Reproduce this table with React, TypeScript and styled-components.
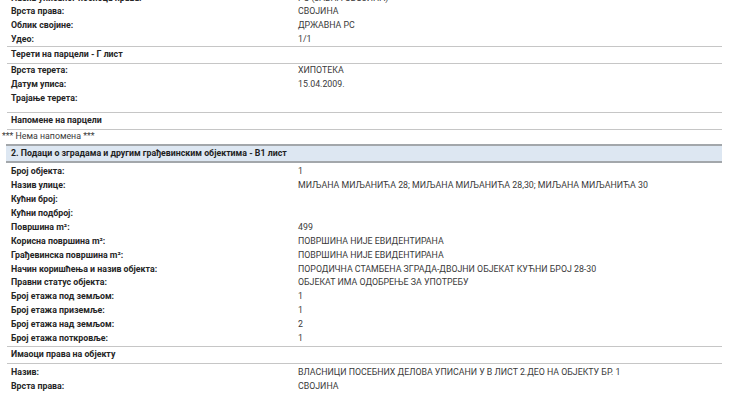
import React from 'react';
import styled, { createGlobalStyle } from 'styled-components';

const GlobalStyle = createGlobalStyle`
	html, body {
		margin: 0;
		padding: 0;
		background: #ffffff;
		overflow: hidden;
	}
	body {
		font-family: Roboto, "Liberation Sans", Arial, sans-serif;
		font-size: 8.8px;
		color: #2b2b2b;
	}
`;

const Page = styled.div`
	display: flex;
	flex-direction: column;
	margin-top: -8.3px;
	width: 730px;
`;

const Group = styled.div<{ $rowH: number; $padBottom?: number; $padTop?: number }>`
	display: flex;
	flex-direction: column;
	margin: 0 8px 0 7px;
	padding-top: ${p => p.$padTop || 0}px;
	padding-bottom: ${p => p.$padBottom || 0}px;

	& > div {
		height: ${p => p.$rowH}px;
		line-height: ${p => p.$rowH}px;
	}
`;

const Row = styled.div`
	display: grid;
	grid-template-columns: 287px 1fr;
	padding-left: 4px;
	white-space: nowrap;
`;

const Label = styled.span`
	font-weight: 700;
	color: #262626;
`;

const Value = styled.span`
	color: #3a3a3a;
`;

const SubHead = styled.div<{ $h?: number }>`
	margin: 0 8px 0 7px;
	padding-left: 4px;
	height: ${p => p.$h || 16}px;
	line-height: ${p => (p.$h || 16) - 2}px;
	border-top: 1px solid #c6c6c6;
	border-bottom: 1px solid #c6c6c6;
	font-weight: 700;
	color: #262626;
`;

const Note = styled.div`
	margin-left: 2px;
	height: 14px;
	line-height: 12px;
	color: #3a3a3a;
`;

const SectionHead = styled.div`
	margin: 0 8px 0 6px;
	padding-left: 5px;
	height: 15px;
	line-height: 15px;
	background: #dde7f2;
	border-top: 2px solid #a3a7ab;
	border-bottom: 2px solid #a3a7ab;
	font-weight: 700;
	color: #1f1f1f;
`;

type Pair = [string, string];

const parcelOwner: Pair[] = [
	['Назив уписаног носиоца права:', 'РС (ЈАВНА СВОЈИНА)'],
	['Врста права:', 'СВОЈИНА'],
	['Облик својине:', 'ДРЖАВНА РС'],
	['Удео:', '1/1'],
];

const burdens: Pair[] = [
	['Врста терета:', 'ХИПОТЕКА'],
	['Датум уписа:', '15.04.2009.'],
	['Трајање терета:', ''],
];

const building: Pair[] = [
	['Број објекта:', '1'],
	['Назив улице:', 'МИЉАНА МИЉАНИЋА 28; МИЉАНА МИЉАНИЋА 28,30; МИЉАНА МИЉАНИЋА 30'],
	['Кућни број:', ''],
	['Кућни подброј:', ''],
	['Површина m²:', '499'],
	['Корисна површина m²:', 'ПОВРШИНА НИЈЕ ЕВИДЕНТИРАНА'],
	['Грађевинска површина m²:', 'ПОВРШИНА НИЈЕ ЕВИДЕНТИРАНА'],
	['Начин коришћења и назив објекта:', 'ПОРОДИЧНА СТАМБЕНА ЗГРАДА-ДВОЈНИ ОБЈЕКАТ КУЋНИ БРОЈ 28-30'],
	['Правни статус објекта:', 'ОБЈЕКАТ ИМА ОДОБРЕЊЕ ЗА УПОТРЕБУ'],
	['Број етажа под земљом:', '1'],
	['Број етажа приземље:', '1'],
	['Број етажа над земљом:', '2'],
	['Број етажа поткровље:', '1'],
];

const buildingOwners: Pair[] = [
	['Назив:', 'ВЛАСНИЦИ ПОСЕБНИХ ДЕЛОВА УПИСАНИ У В ЛИСТ 2.ДЕО НА ОБЈЕКТУ БР. 1'],
	['Врста права:', 'СВОЈИНА'],
];

const Rows = ({ items }: { items: Pair[] }) => (
	<>
		{items.map(([label, value]) => (
			<Row key={label}>
				<Label>{label}</Label>
				<Value>{value}</Value>
			</Row>
		))}
	</>
);

export default function App() {
	return (
		<>
			<GlobalStyle />
			<Page>
				<Group $rowH={13.65}>
					<Rows items={parcelOwner} />
				</Group>
				<SubHead>Терети на парцели - Г лист</SubHead>
				<Group $rowH={13.7} $padBottom={6.5}>
					<Rows items={burdens} />
				</Group>
				<SubHead>Напомене на парцели</SubHead>
				<Note>*** Нема напомена ***</Note>
				<SectionHead>2. Подаци о зградама и другим грађевинским објектима - В1 лист</SectionHead>
				<Group $rowH={13.9} $padTop={2.5}>
					<Rows items={building} />
				</Group>
				<SubHead $h={16.5}>Имаоци права на објекту</SubHead>
				<Group $rowH={13.9} $padTop={1.5}>
					<Rows items={buildingOwners} />
				</Group>
			</Page>
		</>
	);
}
